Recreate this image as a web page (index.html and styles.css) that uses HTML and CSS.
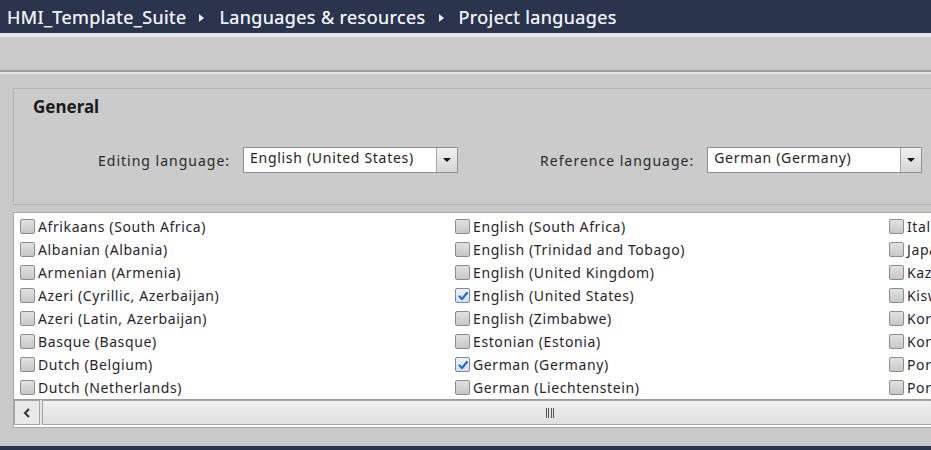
FILE: index.html
```html
<!DOCTYPE html>
<html lang="en">
<head>
  <meta charset="UTF-8" />
  <title>Project languages</title>
  <link rel="stylesheet" href="styles.css">
</head>
<body>
  <div class="titlebar">
    <span>HMI_Template_Suite</span>
    <span class="sep"></span>
    <span>Languages &amp; resources</span>
    <span class="sep"></span>
    <span>Project languages</span>
  </div>
  <div class="toolbar"></div>

  <div class="content">
    <div class="panel">
      <h2>General</h2>
      <div class="fields">
        <label class="lbl lbl-edit">Editing language:</label>
        <div class="combo combo-edit"><span>English (United States)</span><i></i></div>
        <label class="lbl lbl-ref">Reference language:</label>
        <div class="combo combo-ref"><span>German (Germany)</span><i></i></div>
      </div>
    </div>

    <div class="list">
      <div class="grid">
        <div class="col">
          <div class="item"><b class="cb"></b>Afrikaans (South Africa)</div>
          <div class="item"><b class="cb"></b>Albanian (Albania)</div>
          <div class="item"><b class="cb"></b>Armenian (Armenia)</div>
          <div class="item"><b class="cb"></b>Azeri (Cyrillic, Azerbaijan)</div>
          <div class="item"><b class="cb"></b>Azeri (Latin, Azerbaijan)</div>
          <div class="item"><b class="cb"></b>Basque (Basque)</div>
          <div class="item"><b class="cb"></b>Dutch (Belgium)</div>
          <div class="item"><b class="cb"></b>Dutch (Netherlands)</div>
        </div>
        <div class="col">
          <div class="item"><b class="cb"></b>English (South Africa)</div>
          <div class="item"><b class="cb"></b>English (Trinidad and Tobago)</div>
          <div class="item"><b class="cb"></b>English (United Kingdom)</div>
          <div class="item"><b class="cb on"><svg viewBox="0 0 12 12"><path d="M2.5 6.5 L5 9 L10 3" /></svg></b>English (United States)</div>
          <div class="item"><b class="cb"></b>English (Zimbabwe)</div>
          <div class="item"><b class="cb"></b>Estonian (Estonia)</div>
          <div class="item"><b class="cb on"><svg viewBox="0 0 12 12"><path d="M2.5 6.5 L5 9 L10 3" /></svg></b>German (Germany)</div>
          <div class="item"><b class="cb"></b>German (Liechtenstein)</div>
        </div>
        <div class="col">
          <div class="item"><b class="cb"></b>Italian (Italy)</div>
          <div class="item"><b class="cb"></b>Japanese (Japan)</div>
          <div class="item"><b class="cb"></b>Kazakh (Kazakhstan)</div>
          <div class="item"><b class="cb"></b>Kiswahili (Kenya)</div>
          <div class="item"><b class="cb"></b>Korean (Korea)</div>
          <div class="item"><b class="cb"></b>Konkani (India)</div>
          <div class="item"><b class="cb"></b>Portuguese (Brazil)</div>
          <div class="item"><b class="cb"></b>Portuguese (Portugal)</div>
        </div>
      </div>
      <div class="hscroll">
        <div class="sbtn"><svg viewBox="0 0 10 12"><path d="M7 2 L3 6 L7 10" /></svg></div>
        <div class="thumb"><span class="grip"></span></div>
      </div>
    </div>
  </div>

  <div class="footer"></div>
</body>
</html>
```

FILE: styles.css
```css
html, body { margin: 0; height: 450px; overflow: hidden; }
body {
  background: #c9c9c9;
  font-family: "Noto Sans", "Open Sans", Arial, sans-serif;
  font-size: 14px;
  color: #1e1e1e;
  display: flex;
  flex-direction: column;
}

.titlebar {
  height: 33px;
  background: #2b344d;
  color: #eef0f8;
  font-size: 18px;
  display: flex;
  align-items: center;
  padding-left: 7px;
  white-space: nowrap;
  letter-spacing: 0.4px;
  text-shadow: 0 0 0.4px #eef0f8;
}
.titlebar .sep {
  width: 0; height: 0;
  border-top: 4px solid transparent;
  border-bottom: 4px solid transparent;
  border-left: 5px solid #eef0f8;
  margin: 2px 15px 0 13px;
}

.toolbar {
  height: 33px;
  background: #cbcbcb;
  border-top: 4px solid #e7e7e7;
  border-bottom: 2px solid #9c9c9c;
  box-shadow: 0 2px 0 #e3e3e3;
}

.content {
  flex: 1;
  padding: 16px 0 0 13px;
  overflow: hidden;
}

.panel {
  width: 960px;
  height: 115px;
  border: 1px solid #b4b4b4;
  background: #cbcbcb;
}
.panel h2 {
  margin: 6px 0 0 19px;
  font-size: 17px;
  font-weight: bold;
  color: #1b1b1b;
}

.fields {
  display: flex;
  align-items: center;
  margin-top: 29px;
}
.lbl { letter-spacing: 1px; color: #2a2a2a; }
.lbl-edit { margin-left: 84px; }
.lbl-ref { margin-left: 82px; }

.combo {
  width: 213px;
  height: 24px;
  margin-left: 13px;
  background: #fff;
  border: 1px solid #8f8f8f;
  display: flex;
  align-items: center;
  justify-content: space-between;
  letter-spacing: 0.7px;
}
.combo span { padding: 0 0 5px 6px; }
.combo i {
  width: 20px;
  height: 24px;
  border-left: 1px solid #a5a5a5;
  background: linear-gradient(#f2f2f2, #d6d6d6);
  position: relative;
}
.combo i::after {
  content: "";
  position: absolute;
  left: 6px; top: 10px;
  border-left: 4px solid transparent;
  border-right: 4px solid transparent;
  border-top: 4px solid #111;
}

.list {
  margin-top: 7px;
  width: 960px;
  height: 214px;
  background: #fff;
  border: 1px solid #a8a8a8;
  display: flex;
  flex-direction: column;
}
.grid {
  flex: 1;
  display: grid;
  grid-template-columns: 435px 434px 200px;
  padding: 2px 0 0 6px;
}
.item {
  height: 23px;
  display: flex;
  align-items: center;
  white-space: nowrap;
  color: #2a1e2e;
  letter-spacing: 0.6px;
}
.cb {
  width: 13px;
  height: 13px;
  border: 1px solid #8c8c8c;
  border-radius: 2px;
  background: linear-gradient(#e2e2e2, #c7c7c7);
  margin-right: 3px;
  display: flex;
  align-items: center;
  justify-content: center;
}
.cb.on { background: linear-gradient(#eef3f8, #d4dde8); border-color: #7a8a9a; }
.cb svg { width: 12px; height: 12px; }
.cb svg path { fill: none; stroke: #1f6fc9; stroke-width: 2.2; stroke-linecap: round; stroke-linejoin: round; }

.hscroll {
  height: 25px;
  display: flex;
  border-top: 1px solid #9a9a9a;
  background: #e6e6e6;
  margin-bottom: 2px;
}
.sbtn {
  width: 24px;
  border: 1px solid #a6a6a6;
  background: #e9e9e9;
  display: flex;
  align-items: center;
  justify-content: center;
}
.sbtn svg { width: 10px; height: 12px; }
.sbtn path { fill: none; stroke: #333; stroke-width: 2; }
.thumb {
  flex: 1;
  margin-left: 2px;
  border: 1px solid #a6a6a6;
  background: linear-gradient(#f0f0f0, #e0e0e0);
  display: flex;
  align-items: center;
  padding-left: 503px;
}
.grip {
  width: 9px;
  height: 10px;
  background: repeating-linear-gradient(90deg, #555 0 1px, transparent 1px 2.5px);
}

.footer {
  height: 4px;
  background: #2b344d;
}
```
